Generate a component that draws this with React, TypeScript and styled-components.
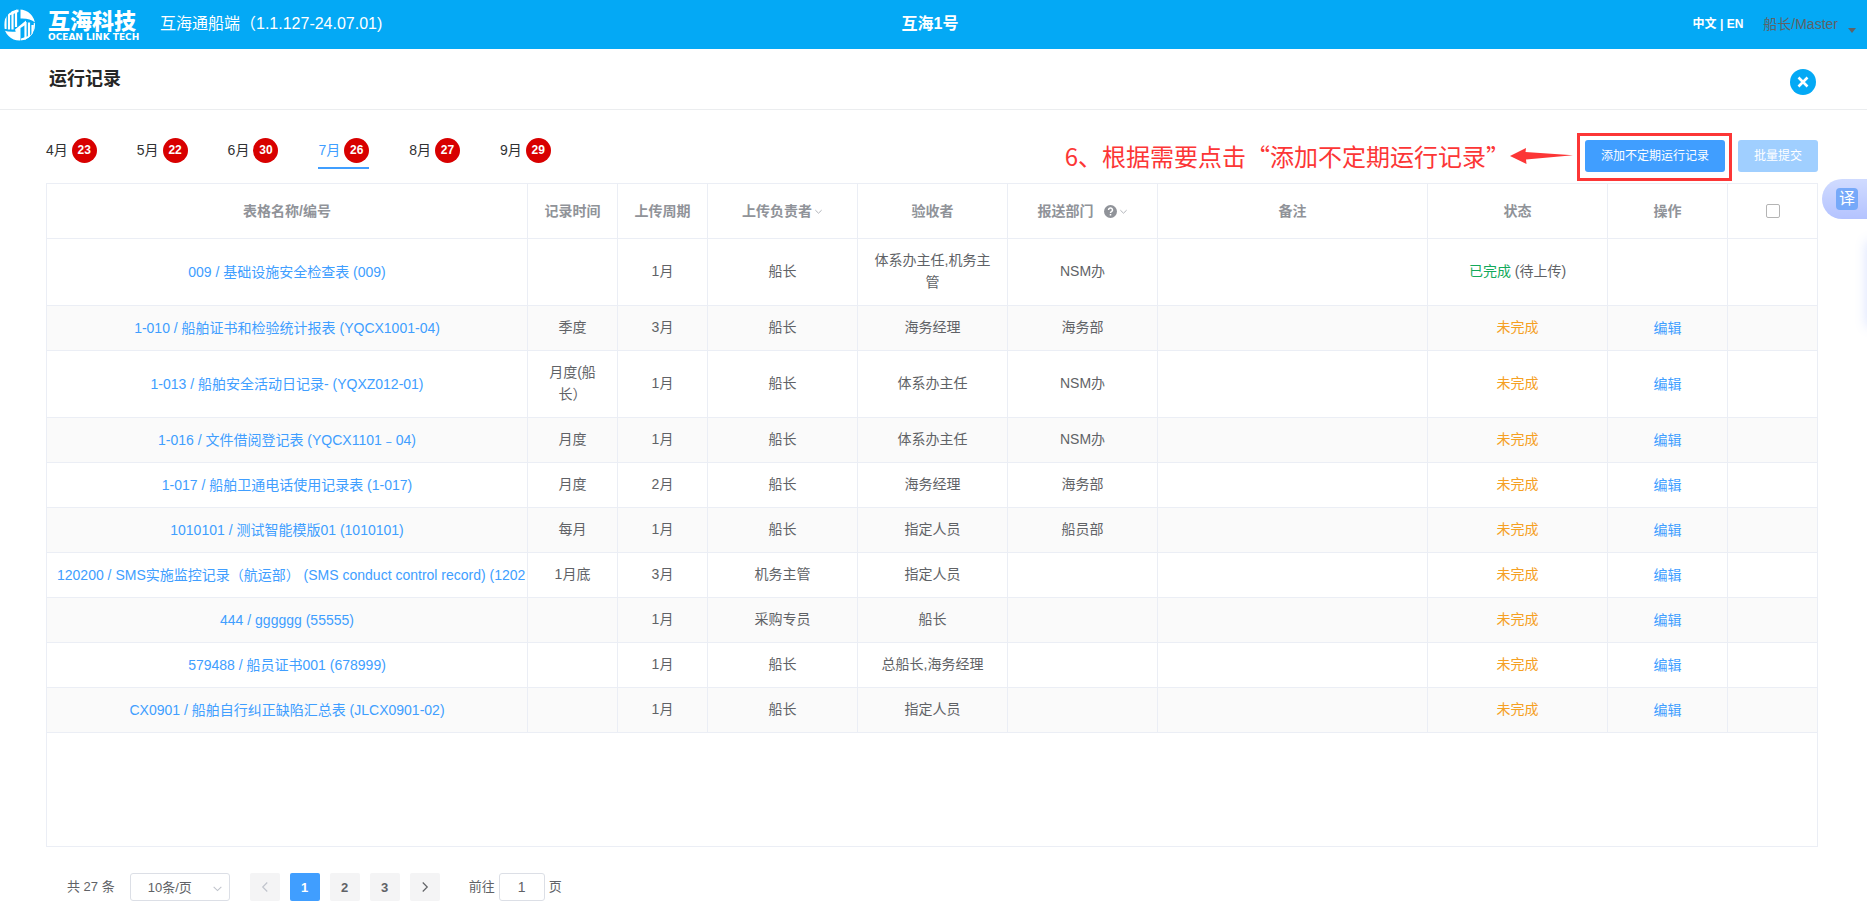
import React from 'react';
import styled, { createGlobalStyle } from 'styled-components';

const GlobalStyle = createGlobalStyle`
  *, *::before, *::after { box-sizing: border-box; }
  body {
    margin: 0;
    background: #fff;
    color: #606266;
    font-family: "Liberation Sans", "Noto Sans CJK SC", sans-serif;
    font-size: 14px;
    line-height: 22px;
    text-spacing-trim: space-all;
  }
  button, input, select { font-family: inherit; }
  a { text-decoration: none; }
`;

const Header = styled.header`
  display: grid;
  grid-template-columns: 1fr auto 1fr;
  align-items: center;
  height: 49px;
  padding: 0 11px 0 4px;
  background: #04a9f5;
  color: #fff;
`;
const Brand = styled.div`
  display: flex;
  align-items: center;
`;
const LogoWords = styled.div`
  display: flex;
  flex-direction: column;
  width: 92px;
  margin: 0 20px 0 12px;
  padding-top: 2px;
  white-space: nowrap;
`;
const LogoName = styled.span`
  font: 900 22px/22px "Noto Sans CJK SC", sans-serif;
`;
const LogoSub = styled.span`
  font: 700 9px/14px "DejaVu Sans", sans-serif;
`;
const AppName = styled.span`
  font-size: 16px;
  line-height: 24px;
  padding-bottom: 2px;
`;
const ShipName = styled.strong`
  font-size: 16px;
  line-height: 24px;
  padding-bottom: 2px;
`;
const UserArea = styled.div`
  display: flex;
  align-items: center;
  justify-content: flex-end;
  padding-bottom: 2px;
`;
const Languages = styled.nav`
  margin-right: 20px;
  font-size: 12px;
  font-weight: 700;
  a { color: #fff; }
`;
const UserButton = styled.button`
  display: flex;
  align-items: center;
  gap: 10px;
  padding: 0;
  border: 0;
  background: none;
  color: #606266;
  font-size: 14px;
  line-height: 22px;
  svg { margin-top: 14px; }
`;

const TitleBar = styled.div`
  display: flex;
  align-items: center;
  justify-content: space-between;
  height: 61px;
  padding: 0 51px 0 49px;
  border-bottom: 1px solid #ebedef;
`;
const Title = styled.h1`
  margin: 0;
  color: #262626;
  font-size: 18px;
  line-height: 24px;
`;
const CloseButton = styled.button`
  display: flex;
  align-items: center;
  justify-content: center;
  width: 26px;
  height: 26px;
  margin-top: 6px;
  padding: 0;
  border: 0;
  border-radius: 50%;
  background: #04a9f5;
`;

const Content = styled.main`
  padding: 24px 49px 0 46px;
`;
const Toolbar = styled.div`
  display: flex;
  justify-content: space-between;
  height: 49px;
`;
const Tabs = styled.nav`
  display: flex;
  gap: 40px;
`;
const Tab = styled.a<{ $active?: boolean }>`
  display: flex;
  align-items: center;
  gap: 4px;
  height: 35px;
  border-bottom: 2px solid ${p => (p.$active ? '#409eff' : 'transparent')};
  color: ${p => (p.$active ? '#409eff' : '#303133')};
`;
const TabLabel = styled.span`
  padding-bottom: 2px;
`;
const Badge = styled.span`
  width: 25px;
  height: 25px;
  border-radius: 50%;
  background: #d80000;
  color: #fff;
  font-size: 12px;
  font-weight: 700;
  line-height: 25px;
  text-align: center;
`;
const Actions = styled.div`
  display: flex;
  align-items: flex-start;
  padding-top: 6px;
`;
const Note = styled.span`
  color: #fc3636;
  font: 24px/32px "Noto Sans CJK SC", sans-serif;
`;
const Arrow = styled.svg`
  margin: 8px 12px 0 0;
`;
const Highlight = styled.div`
  position: relative;
  margin-right: 13px;
  &::after {
    content: "";
    position: absolute;
    inset: -7px -7px -9px -8px;
    border: 3px solid #fc3636;
    pointer-events: none;
  }
`;
const PrimaryButton = styled.button`
  display: block;
  height: 32px;
  padding: 0 16px;
  border: 0;
  border-radius: 3px;
  background: #409eff;
  color: #fff;
  font-size: 12px;
  line-height: 32px;
  &:disabled { background: #a0cfff; }
`;

const TableBox = styled.div`
  min-height: calc(100vh - 255px);
  border: 1px solid #ebeef5;
`;
const Table = styled.table`
  width: 100%;
  border-spacing: 0;
  table-layout: fixed;
  text-align: center;
`;
const Col = styled.col<{ $w?: number }>`
  width: ${p => (p.$w ? `${p.$w}px` : 'auto')};
`;
const Th = styled.th`
  height: 55px;
  padding: 0 10px;
  border-right: 1px solid #ebeef5;
  border-bottom: 1px solid #ebeef5;
  color: #909399;
  font-weight: 700;
  white-space: nowrap;
  &:last-child { border-right: 0; }
`;
const HeadLabel = styled.span`
  display: inline-flex;
  align-items: center;
  gap: 2px;
`;
const Td = styled.td`
  padding: 10px 10px 12px;
  border-right: 1px solid #ebeef5;
  border-bottom: 1px solid #ebeef5;
  &:last-child { border-right: 0; }
`;
const LinkTd = styled(Td)`
  padding: 11px 10px;
  overflow: hidden;
  white-space: nowrap;
`;
const Row = styled.tr`
  &:nth-child(even) { background: #fafafa; }
`;
const Link = styled.a`
  color: #409eff;
`;
const Status = styled.span<{ $done?: boolean }>`
  color: ${p => (p.$done ? '#13a95b' : '#f5a023')};
`;
const Check = styled.input`
  appearance: none;
  display: block;
  width: 14px;
  height: 14px;
  margin: 0 auto;
  border: 1px solid #b4b4b4;
  border-radius: 2px;
  background: #fff;
`;
const HelpIcon = styled.svg`
  margin-left: 8px;
`;

const Pager = styled.nav`
  display: flex;
  align-items: center;
  padding: 26px 21px 18px;
  line-height: 28px;
`;
const SizeBox = styled.div`
  position: relative;
  margin: 0 20px 0 15px;
  svg {
    position: absolute;
    top: 10px;
    right: 7px;
    pointer-events: none;
  }
`;
const SizeSelect = styled.select`
  appearance: none;
  display: block;
  width: 100px;
  height: 28px;
  padding: 0 17px;
  border: 1px solid #dcdfe6;
  border-radius: 3px;
  background: #fff;
  color: #606266;
  font-size: 13px;
`;
const Pages = styled.div`
  display: flex;
  gap: 10px;
  margin-right: 29px;
`;
const PageButton = styled.button<{ $active?: boolean }>`
  display: flex;
  align-items: center;
  justify-content: center;
  width: 30px;
  height: 28px;
  padding: 0;
  border: 0;
  border-radius: 2px;
  background: ${p => (p.$active ? '#409eff' : '#f4f4f5')};
  color: ${p => (p.$active ? '#fff' : '#606266')};
  font-size: 13px;
  font-weight: 700;
`;
const Jump = styled.label`
  display: flex;
  align-items: center;
  gap: 4px;
  font-size: 13px;
`;
const JumpInput = styled.input`
  width: 46px;
  height: 28px;
  padding: 0 3px;
  border: 1px solid #dcdfe6;
  border-radius: 3px;
  color: #606266;
  font-size: 14px;
  text-align: center;
`;
const Total = styled.span`
  font-size: 13px;
`;

const TranslateTab = styled.button`
  position: fixed;
  top: 179px;
  right: 0;
  display: flex;
  align-items: center;
  width: 45px;
  height: 40px;
  padding: 0 0 0 14px;
  border: 0;
  border-radius: 20px 0 0 20px;
  background: linear-gradient(#d0dbff, #b4c3ff);
`;
const TranslateGlyph = styled.span`
  width: 22px;
  height: 22px;
  border-radius: 4px;
  background: #76a9f9;
  color: #fff;
  font-size: 16px;
  line-height: 22px;
  text-align: center;
`;
const SidePanelEdge = styled.div`
  position: fixed;
  top: 242px;
  left: 100%;
  width: 10px;
  height: 84px;
  box-shadow: 0 0 12px rgba(90, 130, 255, 0.25);
`;

const months = [
  ['4月', 23], ['5月', 22], ['6月', 30], ['7月', 26], ['8月', 27], ['9月', 29],
] as const;

type Rec = [name: string, time: string, cycle: string, owner: string, checker: string, dept: string];
const records: Rec[] = [
  ['009 / 基础设施安全检查表 (009)', '', '1月', '船长', '体系办主任,机务主管', 'NSM办'],
  ['1-010 / 船舶证书和检验统计报表 (YQCX1001-04)', '季度', '3月', '船长', '海务经理', '海务部'],
  ['1-013 / 船舶安全活动日记录- (YQXZ012-01)', '月度(船长）', '1月', '船长', '体系办主任', 'NSM办'],
  ['1-016 / 文件借阅登记表 (YQCX1101﹣04)', '月度', '1月', '船长', '体系办主任', 'NSM办'],
  ['1-017 / 船舶卫通电话使用记录表 (1-017)', '月度', '2月', '船长', '海务经理', '海务部'],
  ['1010101 / 测试智能模版01 (1010101)', '每月', '1月', '船长', '指定人员', '船员部'],
  ['120200 / SMS实施监控记录（航运部） (SMS conduct control record) (1202', '1月底', '3月', '机务主管', '指定人员', ''],
  ['444 / gggggg (55555)', '', '1月', '采购专员', '船长', ''],
  ['579488 / 船员证书001 (678999)', '', '1月', '船长', '总船长,海务经理', ''],
  ['CX0901 / 船舶自行纠正缺陷汇总表 (JLCX0901-02)', '', '1月', '船长', '指定人员', ''],
];

const Chevron = ({ d, size = 9, color = '#a8abb2' }: { d: string; size?: number; color?: string }) => (
  <svg width={size} height={size} viewBox="0 0 8 8" fill="none" stroke={color} strokeWidth="0.800">
    <path d={d} />
  </svg>
);
const DOWN = 'M1.200 2.800 4 5.500 6.800 2.800';

const Logo = () => (
  <svg width="32" height="32" viewBox="0 0 32 32">
    <clipPath id="disc"><circle cx="15.500" cy="16" r="15.500" /></clipPath>
    <g clipPath="url(#disc)">
      <path d="M16.500 0H32v14.500Q27 9 16.500 9.500zM14.500 32H0V21.500q5 2 14.500 1z" fill="#fff" />
      <path d="M1.500 6v14M5 3v17.500M8.500 2v18.500M12 0v18M28.500 16v12M25 13.500V30M21.500 13v19M30.800 14v8" fill="none" stroke="#fff" strokeWidth="2.200" />
      <path d="M11 20.500 22 11.500v4L16.500 19v13h-2z" fill="#fff" />
      <path d="M9 0h5.500v3L4 7z" fill="#fff" />
      <path d="M17 32v-2.500l9-3 3-3v6z" fill="#fff" />
    </g>
  </svg>
);

export default function App() {
  return (
    <>
      <GlobalStyle />
      <Header>
        <Brand>
          <Logo />
          <LogoWords>
            <LogoName>互海科技</LogoName>
            <LogoSub>OCEAN LINK TECH</LogoSub>
          </LogoWords>
          <AppName>互海通船端（1.1.127-24.07.01)</AppName>
        </Brand>
        <ShipName>互海1号</ShipName>
        <UserArea>
          <Languages><a href="#zh">中文</a> | <a href="#en">EN</a></Languages>
          <UserButton>
            船长/Master
            <svg width="8" height="5" viewBox="0 0 8 5"><path d="M0 0h8L4 5z" fill="#606266" /></svg>
          </UserButton>
        </UserArea>
      </Header>

      <TitleBar>
        <Title>运行记录</Title>
        <CloseButton aria-label="关闭">
          <svg width="12" height="12" viewBox="0 0 12 12" stroke="#fff" strokeWidth="2.600"><path d="M1.500 1.500l9 9M10.500 1.500l-9 9" /></svg>
        </CloseButton>
      </TitleBar>

      <Content>
        <Toolbar>
          <Tabs>
            {months.map(([m, n]) => (
              <Tab key={m} href={`#${m}`} $active={m === '7月'}><TabLabel>{m}</TabLabel><Badge>{n}</Badge></Tab>
            ))}
          </Tabs>
          <Actions>
            <Note>6、根据需要点击“添加不定期运行记录”</Note>
            <Arrow width="63" height="16" viewBox="0 0 63 16">
              <path d="M0 8 16 0 15.500 4 63 7.300 16 11.500 16.500 16z" fill="#fc3636" />
            </Arrow>
            <Highlight><PrimaryButton>添加不定期运行记录</PrimaryButton></Highlight>
            <PrimaryButton disabled>批量提交</PrimaryButton>
          </Actions>
        </Toolbar>

        <TableBox>
          <Table>
            <colgroup>
              <Col />
              {[90, 90, 150, 150, 150, 270, 180, 120, 89].map((w, i) => <Col key={i} $w={w} />)}
            </colgroup>
            <thead>
              <tr>
                <Th>表格名称/编号</Th>
                <Th>记录时间</Th>
                <Th>上传周期</Th>
                <Th><HeadLabel>上传负责者<Chevron d={DOWN} /></HeadLabel></Th>
                <Th>验收者</Th>
                <Th>
                  <HeadLabel>
                    报送部门
                    <HelpIcon width="13" height="13" viewBox="0 0 13 13">
                      <circle cx="6.500" cy="6.500" r="6.500" fill="#909399" />
                      <path d="M4.500 5a2 2 0 1 1 3 1.700q-1 .5-1 1.300M6.500 9v1.500" fill="none" stroke="#fff" strokeWidth="1.500" />
                    </HelpIcon>
                    <Chevron d={DOWN} />
                  </HeadLabel>
                </Th>
                <Th>备注</Th>
                <Th>状态</Th>
                <Th>操作</Th>
                <Th><Check type="checkbox" aria-label="全选" /></Th>
              </tr>
            </thead>
            <tbody>
              {records.map(([name, ...rest], i) => (
                <Row key={name}>
                  <LinkTd><Link href="#record">{name}</Link></LinkTd>
                  {rest.map((t, j) => <Td key={j}>{t}</Td>)}
                  <Td />
                  <Td>{i === 0 ? <><Status $done>已完成</Status> (待上传)</> : <Status>未完成</Status>}</Td>
                  <LinkTd>{i > 0 && <Link href="#edit">编辑</Link>}</LinkTd>
                  <Td />
                </Row>
              ))}
            </tbody>
          </Table>
        </TableBox>

        <Pager>
          <Total>共 27 条</Total>
          <SizeBox>
            <SizeSelect aria-label="每页条数"><option>10条/页</option></SizeSelect>
            <Chevron d={DOWN} color="#c0c4cc" size={11} />
          </SizeBox>
          <Pages>
            <PageButton aria-label="上一页" disabled><Chevron d="M5.500 1 2.500 4 5.500 7" size={12} color="#c0c4cc" /></PageButton>
            <PageButton $active>1</PageButton>
            <PageButton>2</PageButton>
            <PageButton>3</PageButton>
            <PageButton aria-label="下一页"><Chevron d="M2.500 1 5.500 4 2.500 7" size={12} color="#606266" /></PageButton>
          </Pages>
          <Jump>前往<JumpInput defaultValue="1" />页</Jump>
        </Pager>
      </Content>

      <TranslateTab><TranslateGlyph>译</TranslateGlyph></TranslateTab>
      <SidePanelEdge />
    </>
  );
}
